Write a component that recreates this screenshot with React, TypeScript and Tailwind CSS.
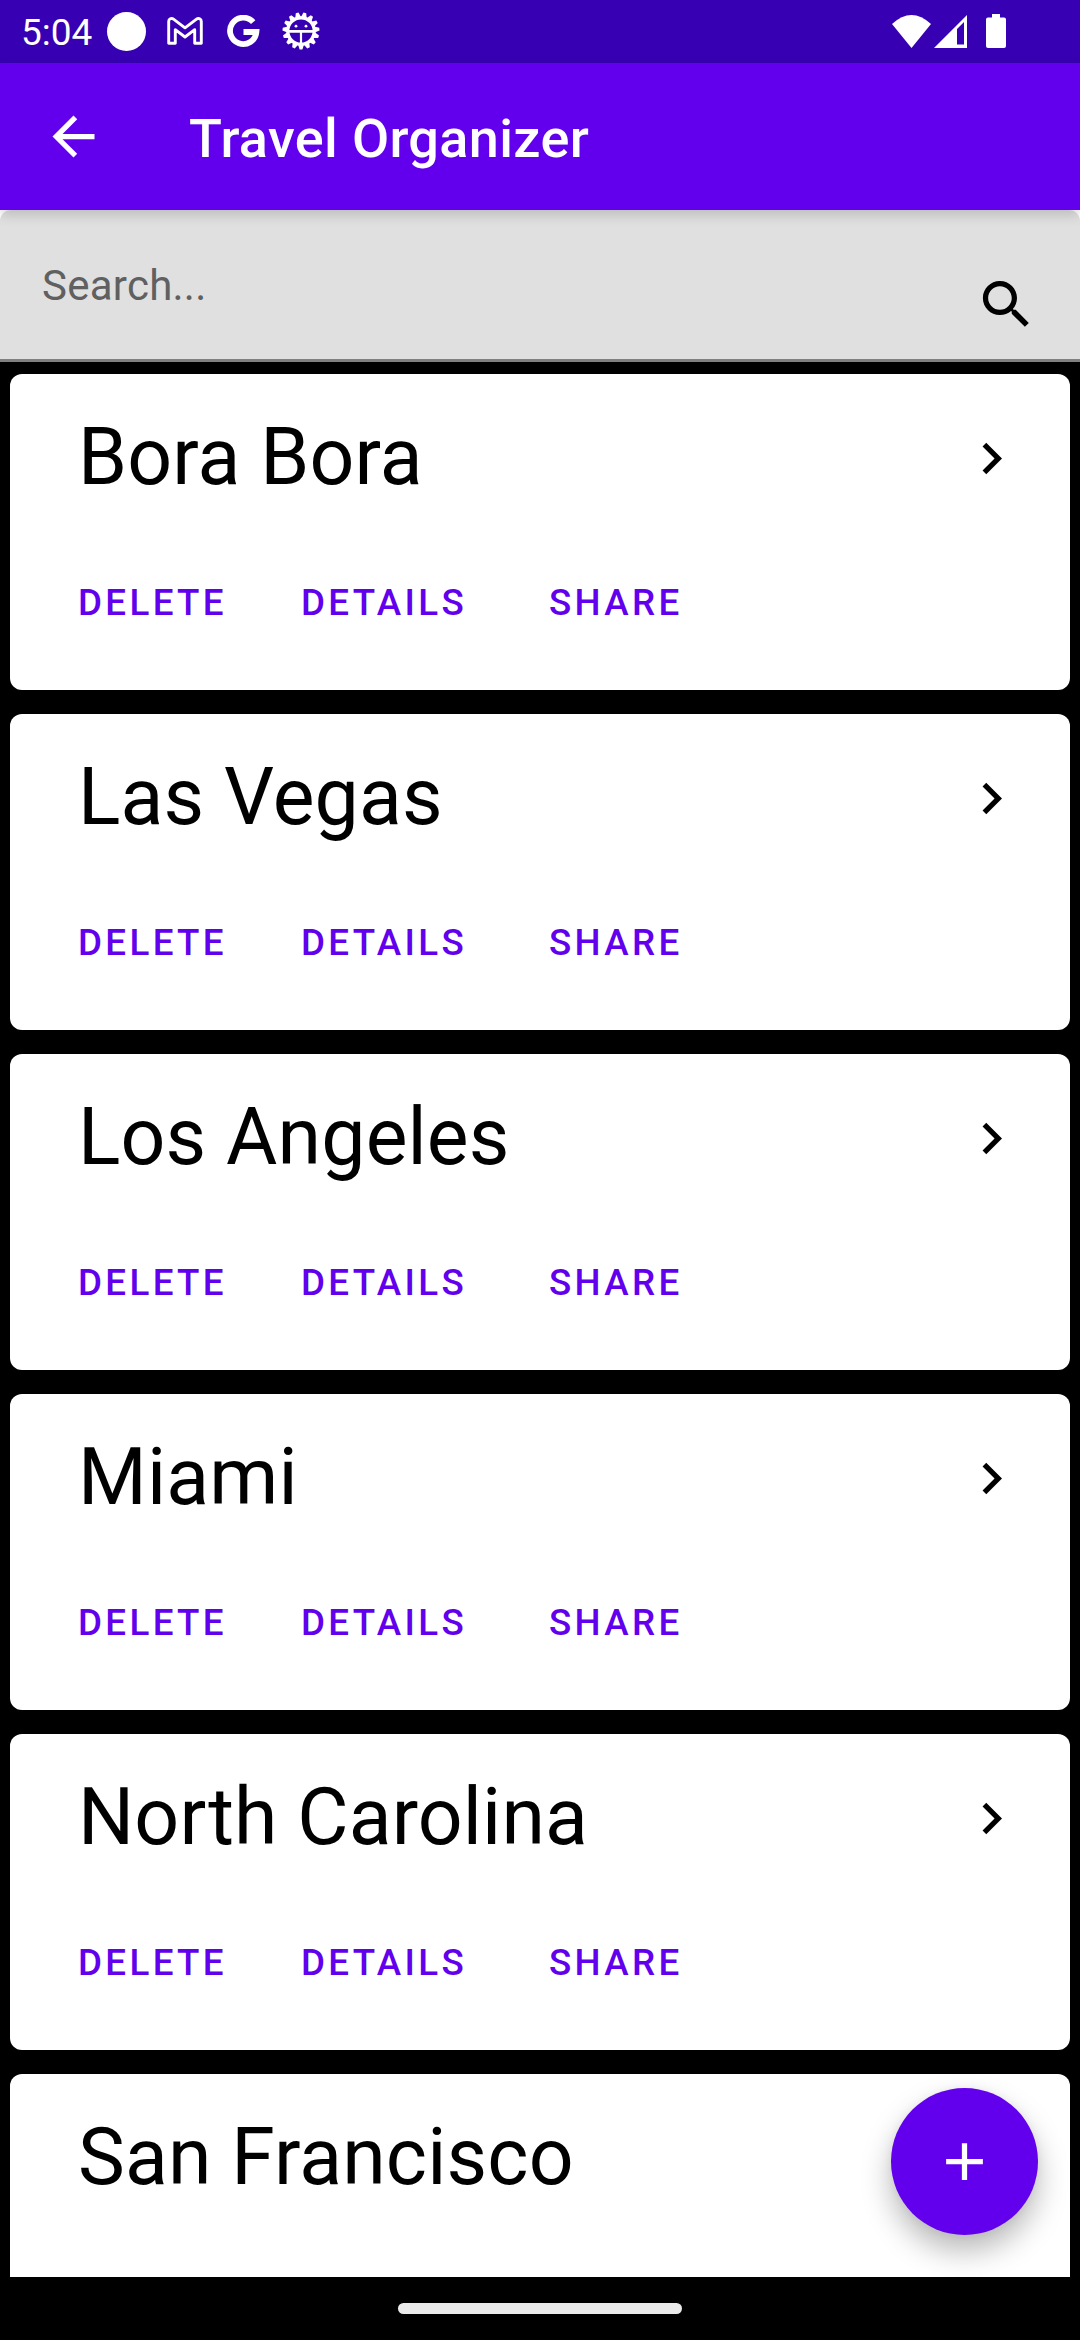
import React from "react";

const places = [
  { name: "Bora Bora", actions: true },
  { name: "Las Vegas", actions: true },
  { name: "Los Angeles", actions: true },
  { name: "Miami", actions: true },
  { name: "North Carolina", actions: true },
  { name: "San Francisco", actions: false },
];

function GearBug() {
  const teeth = Array.from({ length: 15 }, (_, i) => 12 + i * 24);
  return (
    <svg className="-mt-[1px] ml-[22px] h-[38px] w-[38px]" viewBox="-19 -19 38 38">
      {teeth.map((a) => (
        <path key={a} d="M-3 -13.500 L-1.400 -18.500 H1.400 L3 -13.500Z" fill="#fff" transform={`rotate(${a})`} />
      ))}
      <circle r="13.2" fill="none" stroke="#fff" strokeWidth="3.2" />
      <path d="M-12 -1H12V1.700H1.100V13H-1.100V1.700H-12Z" fill="#fff" />
      <circle cx="-5" cy="-4.800" r="1.4" fill="#fff" />
      <circle cx="5" cy="-4.800" r="1.4" fill="#fff" />
    </svg>
  );
}

function StatusBar() {
  return (
    <div className="flex h-[63px] shrink-0 items-center bg-[#3700b3] text-white">
      <span className="ml-[21px] w-[86px] pt-[2px] text-[37px] leading-[63px]">5:04</span>
      <span className="h-[39px] w-[39px] rounded-full bg-white" />
      <svg className="-mt-[1px] ml-[21px] h-[28px] w-[36px]" viewBox="0 0 36 28" fill="none" stroke="#fff" strokeWidth="2.9" strokeLinejoin="round">
        <path d="M1.700 26.300V4.500C1.700 1.800 4.300 0.600 6.500 2.200L18 10.800L29.500 2.200C31.700 0.600 34.300 1.800 34.300 4.500V26.300H27.700V12.700L18 20L8.300 12.700V26.300Z" />
      </svg>
      <svg className="ml-[24px] h-[33px] w-[33px]" viewBox="0 0 33 33">
        <path d="M26.200 7.200A13.200 13.200 0 1 0 29.400 17H16.500" fill="none" stroke="#fff" strokeWidth="5.800" />
      </svg>
      <GearBug />
      <div className="-mt-[1px] ml-auto mr-[74px] flex items-center">
        <svg className="h-[33px] w-[39px]" viewBox="0 0 39 33" fill="#fff">
          <path d="M0 9Q19.500 -9 39 9L19.500 33Z" />
        </svg>
        <svg className="ml-[3px] h-[33px] w-[33px]" viewBox="0 0 33 33" fill="#fff">
          <path fillRule="evenodd" d="M0 33L33 0V33ZM23 14V29.500H30V7Z" />
        </svg>
        <svg className="ml-[19px] h-[34px] w-[20px]" viewBox="0 0 20 34" fill="#fff">
          <path d="M6 0H14V3.500H18Q20 3.500 20 5.500V32Q20 34 18 34H2Q0 34 0 32V5.500Q0 3.500 2 3.500H6Z" />
        </svg>
      </div>
    </div>
  );
}

function PlaceCard({ name, actions }: { name: string; actions: boolean }) {
  return (
    <article className="h-[316px] shrink-0 rounded-[12px] bg-white pl-[68px]">
      <div className="flex h-[164px] items-center justify-between pr-[47px]">
        <h2 className="pt-[1px] text-[78.75px] leading-[92px] tracking-[0.15px]">{name}</h2>
        <svg className="mt-[5px] h-[63px] w-[63px]" viewBox="0 0 24 24">
          <path d="M10 6L8.590 7.410L13.170 12L8.590 16.590L10 18L16 12Z" />
        </svg>
      </div>
      {actions && (
        <div className="flex h-[126px] items-center pt-[3px] text-[36.75px] font-medium tracking-[3.35px] text-[#6200ee]">
          <button className="w-[223px] text-left">DELETE</button>
          <button className="w-[248px] text-left">DETAILS</button>
          <button>SHARE</button>
        </div>
      )}
    </article>
  );
}

export default function App() {
  return (
    <div className="relative flex h-[2340px] w-[1080px] flex-col overflow-hidden bg-black font-[Roboto,sans-serif] text-black">
      <StatusBar />
      <header className="z-10 flex h-[147px] shrink-0 items-center bg-[#6200ee] pl-[42px] text-white shadow-[0_5px_12px_rgba(0,0,0,0.16)]">
        <svg className="h-[63px] w-[63px]" viewBox="0 0 24 24" fill="#fff">
          <path d="M20 11H7.830L13.420 5.410L12 4L4 12L12 20L13.410 18.590L7.830 13H20Z" />
        </svg>
        <h1 className="ml-[84px] pt-[4px] text-[54px] font-medium tracking-[0.35px]">Travel Organizer</h1>
      </header>
      <div className="h-[152px] shrink-0 bg-white">
        <div className="flex h-[152px] justify-between rounded-t-[11px] border-b-[3px] border-[#808080] bg-[#e0e0e0] pl-[42px] pr-[42px]">
          <span className="pt-[46px] text-[42px] leading-[60px] tracking-[0.25px] text-[#606060]">Search...</span>
          <svg className="mt-[63px] h-[63px] w-[63px]" viewBox="0 0 24 24">
            <path d="M15.500 14h-.79l-.28-.27C15.410 12.590 16 11.110 16 9.500 16 5.910 13.090 3 9.500 3S3 5.910 3 9.500 5.910 16 9.500 16c1.610 0 3.090-.59 4.230-1.570l.27.28v.79l5 4.990L20.490 19l-4.990-5zm-6 0C7.010 14 5 11.990 5 9.500S7.010 5 9.500 5 14 7.010 14 9.500 11.990 14 9.500 14z" />
          </svg>
        </div>
      </div>
      <main className="relative flex h-[1915px] shrink-0 flex-col gap-[24px] overflow-hidden px-[10px] pt-[12px]">
        {places.map((p) => (
          <PlaceCard key={p.name} name={p.name} actions={p.actions} />
        ))}
        <button className="absolute right-[42px] bottom-[42px] flex h-[147px] w-[147px] items-center justify-center rounded-full bg-[#6200ee] shadow-[0_16px_30px_rgba(0,0,0,0.28),0_0_10px_rgba(0,0,0,0.05)]">
          <svg className="h-[63px] w-[63px]" viewBox="0 0 24 24" fill="#fff">
            <path d="M19 13H13V19H11V13H5V11H11V5H13V11H19Z" />
          </svg>
        </button>
      </main>
      <footer className="flex h-[63px] shrink-0 justify-center pt-[26px]">
        <span className="h-[11px] w-[284px] rounded-full bg-[#ebebeb]" />
      </footer>
    </div>
  );
}
